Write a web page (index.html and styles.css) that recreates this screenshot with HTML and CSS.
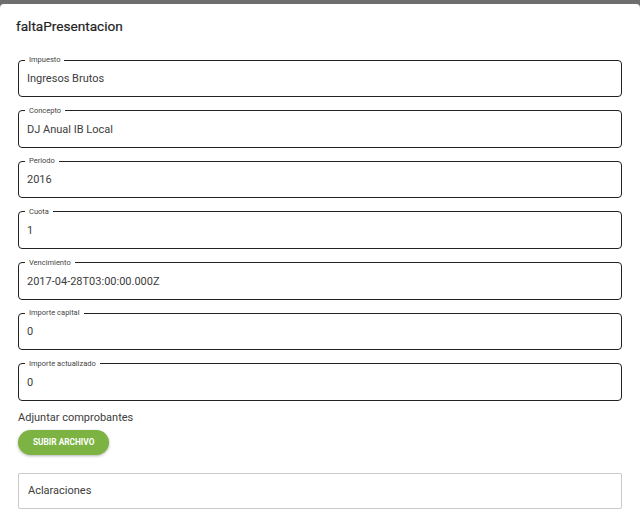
FILE: index.html
```html
<!DOCTYPE html>
<html lang="es">
<head>
<meta charset="utf-8">
<title>faltaPresentacion</title>
<link rel="stylesheet" href="styles.css">
</head>
<body>
<div class="dialog">
  <h2 class="title">faltaPresentacion</h2>
  <form class="form">
    <fieldset class="field"><legend class="field-label">Impuesto</legend><div class="field-value">Ingresos Brutos</div></fieldset>
    <fieldset class="field"><legend class="field-label">Concepto</legend><div class="field-value">DJ Anual IB Local</div></fieldset>
    <fieldset class="field"><legend class="field-label">Periodo</legend><div class="field-value">2016</div></fieldset>
    <fieldset class="field"><legend class="field-label">Cuota</legend><div class="field-value">1</div></fieldset>
    <fieldset class="field"><legend class="field-label">Vencimiento</legend><div class="field-value">2017-04-28T03:00:00.000Z</div></fieldset>
    <fieldset class="field"><legend class="field-label">Importe capital</legend><div class="field-value">0</div></fieldset>
    <fieldset class="field"><legend class="field-label">Importe actualizado</legend><div class="field-value">0</div></fieldset>
    <div class="attach-label">Adjuntar comprobantes</div>
    <button type="button" class="upload-btn">SUBIR ARCHIVO</button>
    <div class="notes">Aclaraciones</div>
  </form>
</div>
</body>
</html>
```

FILE: styles.css
```css
html, body {
  margin: 0;
  padding: 0;
  height: 100%;
}
body {
  background: #6e6e6e;
  font-family: Roboto, "Noto Sans", Arial, sans-serif;
  color: #3c3c3c;
  overflow: hidden;
}
.dialog {
  margin-top: 4px;
  background: #fff;
  border-radius: 4px 4px 0 0;
  min-height: 519px;
  padding: 14px 0 0 0;
  box-sizing: border-box;
}
.title {
  margin: 0 0 21px 16px;
  font-size: 13.6px;
  line-height: 16px;
  font-weight: 400;
  color: #222;
  -webkit-text-stroke: 0.2px #222;
}
.form {
  padding: 0 18px;
  display: flex;
  flex-direction: column;
}
.field {
  margin: 0 0 8.67px 0;
  padding: 7px 8px 10px 8px;
  border: 1px solid #222;
  border-radius: 4px;
  min-width: 0;
}
.field:last-of-type {
  margin-bottom: 10px;
}
.field-label {
  font-size: 7.5px;
  line-height: 10px;
  padding: 0 4px;
  margin-left: -2px;
  color: #444;
}
.field-value {
  font-size: 11px;
  line-height: 14px;
  color: #3c3c3c;
}
.attach-label {
  font-size: 11px;
  line-height: 14px;
  color: #3c3c3c;
  margin-bottom: 5px;
}
.upload-btn {
  align-self: flex-start;
  height: 25px;
  padding: 0 15px;
  border: none;
  border-radius: 13px;
  background: #7cb342;
  color: #fff;
  font-family: Roboto, Arial, sans-serif;
  font-weight: 700;
  font-size: 8.3px;
  box-shadow: 0 1px 3px rgba(0,0,0,0.3);
  margin-bottom: 18px;
}
.notes {
  border: 1px solid #cacaca;
  border-radius: 2px;
  padding: 10px 9px;
  font-size: 11px;
  line-height: 14px;
  color: #3c3c3c;
}
```
